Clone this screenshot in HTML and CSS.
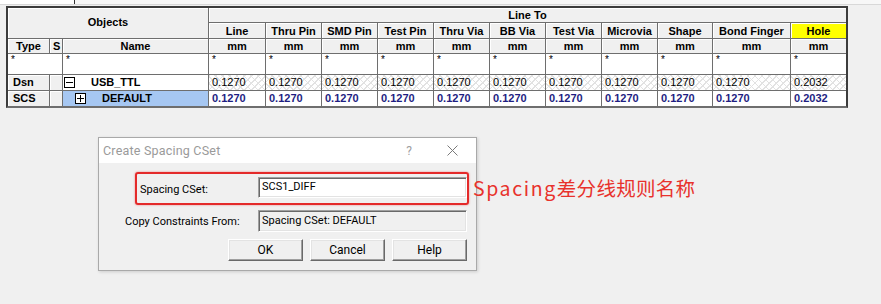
FILE: index.html
```
<!DOCTYPE html>
<html>
<head>
<meta charset="utf-8">
<link rel="stylesheet" href="styles.css">
</head>
<body>
<div class="topstrip"><div class="tab"></div></div>
<div class="pane">
  <div class="grid">
    <div class="hd objects">Objects</div>
    <div class="hd lineto">Line To</div>
    <div class="hd">Line</div>
    <div class="hd">Thru Pin</div>
    <div class="hd">SMD Pin</div>
    <div class="hd">Test Pin</div>
    <div class="hd">Thru Via</div>
    <div class="hd">BB Via</div>
    <div class="hd">Test Via</div>
    <div class="hd">Microvia</div>
    <div class="hd">Shape</div>
    <div class="hd">Bond Finger</div>
    <div class="hd hole">Hole</div>

    <div class="hd">Type</div>
    <div class="hd sleft">S</div>
    <div class="hd">Name</div>
    <div class="hd">mm</div>
    <div class="hd">mm</div>
    <div class="hd">mm</div>
    <div class="hd">mm</div>
    <div class="hd">mm</div>
    <div class="hd">mm</div>
    <div class="hd">mm</div>
    <div class="hd">mm</div>
    <div class="hd">mm</div>
    <div class="hd">mm</div>
    <div class="hd">mm</div>

    <div class="flt span2">*</div>
    <div class="flt">*</div>
    <div class="flt">*</div>
    <div class="flt">*</div>
    <div class="flt">*</div>
    <div class="flt">*</div>
    <div class="flt">*</div>
    <div class="flt">*</div>
    <div class="flt">*</div>
    <div class="flt">*</div>
    <div class="flt">*</div>
    <div class="flt">*</div>
    <div class="flt">*</div>

    <div class="typ">Dsn</div>
    <div class="typ"></div>
    <div class="name"><span class="box minus"></span><span class="nm nm1">USB_TTL</span></div>
    <div class="val hatch">0.1270</div>
    <div class="val hatch">0.1270</div>
    <div class="val hatch">0.1270</div>
    <div class="val hatch">0.1270</div>
    <div class="val hatch">0.1270</div>
    <div class="val hatch">0.1270</div>
    <div class="val hatch">0.1270</div>
    <div class="val hatch">0.1270</div>
    <div class="val hatch">0.1270</div>
    <div class="val hatch">0.1270</div>
    <div class="val hatch">0.2032</div>

    <div class="typ">SCS</div>
    <div class="typ"></div>
    <div class="name sel"><span class="box plus"></span><span class="nm nm2">DEFAULT</span></div>
    <div class="val bold">0.1270</div>
    <div class="val bold">0.1270</div>
    <div class="val bold">0.1270</div>
    <div class="val bold">0.1270</div>
    <div class="val bold">0.1270</div>
    <div class="val bold">0.1270</div>
    <div class="val bold">0.1270</div>
    <div class="val bold">0.1270</div>
    <div class="val bold">0.1270</div>
    <div class="val bold">0.1270</div>
    <div class="val bold">0.2032</div>
  </div>
</div>

<div class="dialog">
  <div class="titlebar">
    <span class="title">Create Spacing CSet</span>
    <span class="qmark">?</span>
    <svg class="close" width="11" height="11" viewBox="0 0 11 11"><path d="M0.5 0.5 L10.5 10.5 M10.5 0.5 L0.5 10.5" stroke="#7a7a7a" stroke-width="1" fill="none"/></svg>
  </div>
  <div class="dlg-body">
    <div class="hlbox">
      <span class="lbl lbl1">Spacing CSet:</span>
      <div class="field">SCS1_DIFF</div>
    </div>
    <div class="row2">
      <span class="lbl lbl2">Copy Constraints From:</span>
      <div class="field ro">Spacing CSet: DEFAULT</div>
    </div>
    <div class="buttons">
      <div class="btn">OK</div>
      <div class="btn">Cancel</div>
      <div class="btn">Help</div>
    </div>
  </div>
</div>
<div class="annot"><span class="lat">Spacing</span>差分线规则名称</div>
</body>
</html>
```
FILE: styles.css
```
html, body {
  margin: 0;
  padding: 0;
}
body {
  width: 881px;
  height: 304px;
  background: #f0f0f0;
  font-family: "Liberation Sans", Arial, sans-serif;
  position: relative;
  overflow: hidden;
}
.topstrip {
  height: 4px;
  border-bottom: 1px solid #d8d8d8;
  display: flex;
  background: #f7f7f7;
}
.tab {
  width: 74px;
  height: 4px;
  background: #fff;
  border-right: 1px solid #333;
}
.pane {
  padding-left: 6px;
  padding-top: 1px;
  height: 112px;
}
.grid {
  display: grid;
  width: max-content;
  grid-template-columns: 41px 12px 145px 56px 55px 55px 55px 55px 55px 55px 55px 54px 77px 55px;
  grid-template-rows: 14px 15px 14px 20px 15px 15px;
  gap: 1px;
  background: #6e6e6e;
  border: 2px solid #3c3c3c;
  border-bottom-color: #6e6e6e;
  font-size: 11px;
}
.grid > div {
  overflow: hidden;
  white-space: nowrap;
}
.hd {
  background: #f0f0f0;
  font-weight: bold;
  color: #000;
  display: flex;
  align-items: center;
  justify-content: center;
  box-shadow: inset 1px 1px 0 #fff;
  line-height: 1;
  padding-top: 1px;
  box-sizing: border-box;
}
.objects {
  grid-column: 1 / 4;
  grid-row: 1 / 3;
  padding-bottom: 2px;
}
.lineto {
  grid-column: 4 / 15;
}
.hole {
  background: #ffff00;
}
.sleft {
  justify-content: flex-start;
  padding-left: 3px;
}
.flt {
  background: #fff;
  font-size: 10px;
  padding: 1px 0 0 3px;
  line-height: 9px;
}
.span2 {
  grid-column: 1 / 3;
}
.typ {
  background: #f0f0f0;
  box-shadow: inset 1px 1px 0 #fff;
  font-weight: bold;
  display: flex;
  align-items: center;
  padding-left: 5px;
  line-height: 1;
}
.name {
  background: #fff;
  display: flex;
  align-items: center;
  font-weight: bold;
  line-height: 1;
}
.name.sel {
  background: #a6c7f2;
}
.box {
  width: 9px;
  height: 9px;
  border: 1px solid #000;
  background: #fff;
  position: relative;
  flex: none;
}
.minus {
  margin-left: 1px;
}
.plus {
  margin-left: 12px;
}
.box::before {
  content: "";
  position: absolute;
  left: 1px;
  right: 1px;
  top: 4px;
  height: 1px;
  background: #000;
}
.plus::after {
  content: "";
  position: absolute;
  top: 1px;
  bottom: 1px;
  left: 4px;
  width: 1px;
  background: #000;
}
.nm1 {
  margin-left: 16px;
}
.nm2 {
  margin-left: 16px;
}
.val {
  background: #fff;
  display: flex;
  align-items: center;
  padding-left: 3px;
  line-height: 1;
}
.hatch {
  background-color: #fff;
  background-image:
    repeating-linear-gradient(45deg, transparent 0 4px, #e2e2e2 4px 5px),
    repeating-linear-gradient(-45deg, transparent 0 4px, #e2e2e2 4px 5px);
}
.bold {
  font-weight: bold;
  color: #1e1e82;
}

/* dialog */
.dialog {
  position: absolute;
  left: 98px;
  top: 137px;
  width: 377px;
  height: 132px;
  border: 1px solid #a9a9a9;
  background: #f0f0f0;
  box-shadow: 1px 1px 3px rgba(0,0,0,0.15);
  font-family: Roboto, "Liberation Sans", sans-serif;
  font-size: 11px;
  color: #000;
}
.titlebar {
  height: 25px;
  background: #fff;
  display: flex;
  align-items: center;
}
.title {
  margin-left: 4px;
  font-size: 12.5px;
  color: #9a9a9a;
  letter-spacing: 0.2px;
  flex: 1;
}
.qmark {
  color: #a0a0a0;
  font-size: 12px;
  margin-right: 35px;
}
.close {
  margin-right: 18px;
  display: block;
}
.dlg-body {
  display: flex;
  flex-direction: column;
  align-items: flex-start;
  padding-top: 9px;
}
.hlbox {
  margin-left: 36px;
  width: 327px;
  height: 26px;
  border: 2px solid #e42a2a;
  border-radius: 3px;
  box-shadow: 0 0 2px rgba(230,40,40,0.6);
  display: flex;
  align-items: flex-start;
  padding: 3px 0 0 3px;
  box-sizing: content-box;
}
.lbl {
  display: block;
  flex: none;
}
.lbl1 {
  width: 118px;
  padding-top: 6px;
}
.field {
  border: 1px solid;
  border-color: #a0a0a0 #fff #fff #a0a0a0;
  box-shadow: inset 1px 1px 0 #696969, inset -1px -1px 0 #e3e3e3;
  background: #fff;
  padding: 2px 0 0 3px;
  box-sizing: border-box;
  width: 209px;
  height: 21px;
  line-height: 14px;
}
.field.ro {
  background: #f0f0f0;
  height: 22px;
  padding-top: 3px;
}
.row2 {
  margin-left: 26px;
  margin-top: 5px;
  display: flex;
  align-items: center;
}
.lbl2 {
  width: 133px;
}
.buttons {
  margin-top: 7px;
  margin-left: 129px;
  display: flex;
  gap: 7px;
}
.btn {
  width: 75px;
  height: 22px;
  box-sizing: border-box;
  border: 1px solid;
  border-color: #fff #696969 #696969 #fff;
  box-shadow: inset -1px -1px 0 #a0a0a0, inset 1px 1px 0 #e3e3e3;
  background: #f0f0f0;
  display: flex;
  align-items: center;
  justify-content: center;
  font-size: 12px;
}
.annot {
  position: absolute;
  left: 473px;
  top: 175px;
  font-family: "Noto Sans CJK SC", sans-serif;
  font-size: 19.5px;
  line-height: 26px;
  color: #e8322c;
  letter-spacing: 0.3px;
}
.lat {
  letter-spacing: 1.6px;
}
```
